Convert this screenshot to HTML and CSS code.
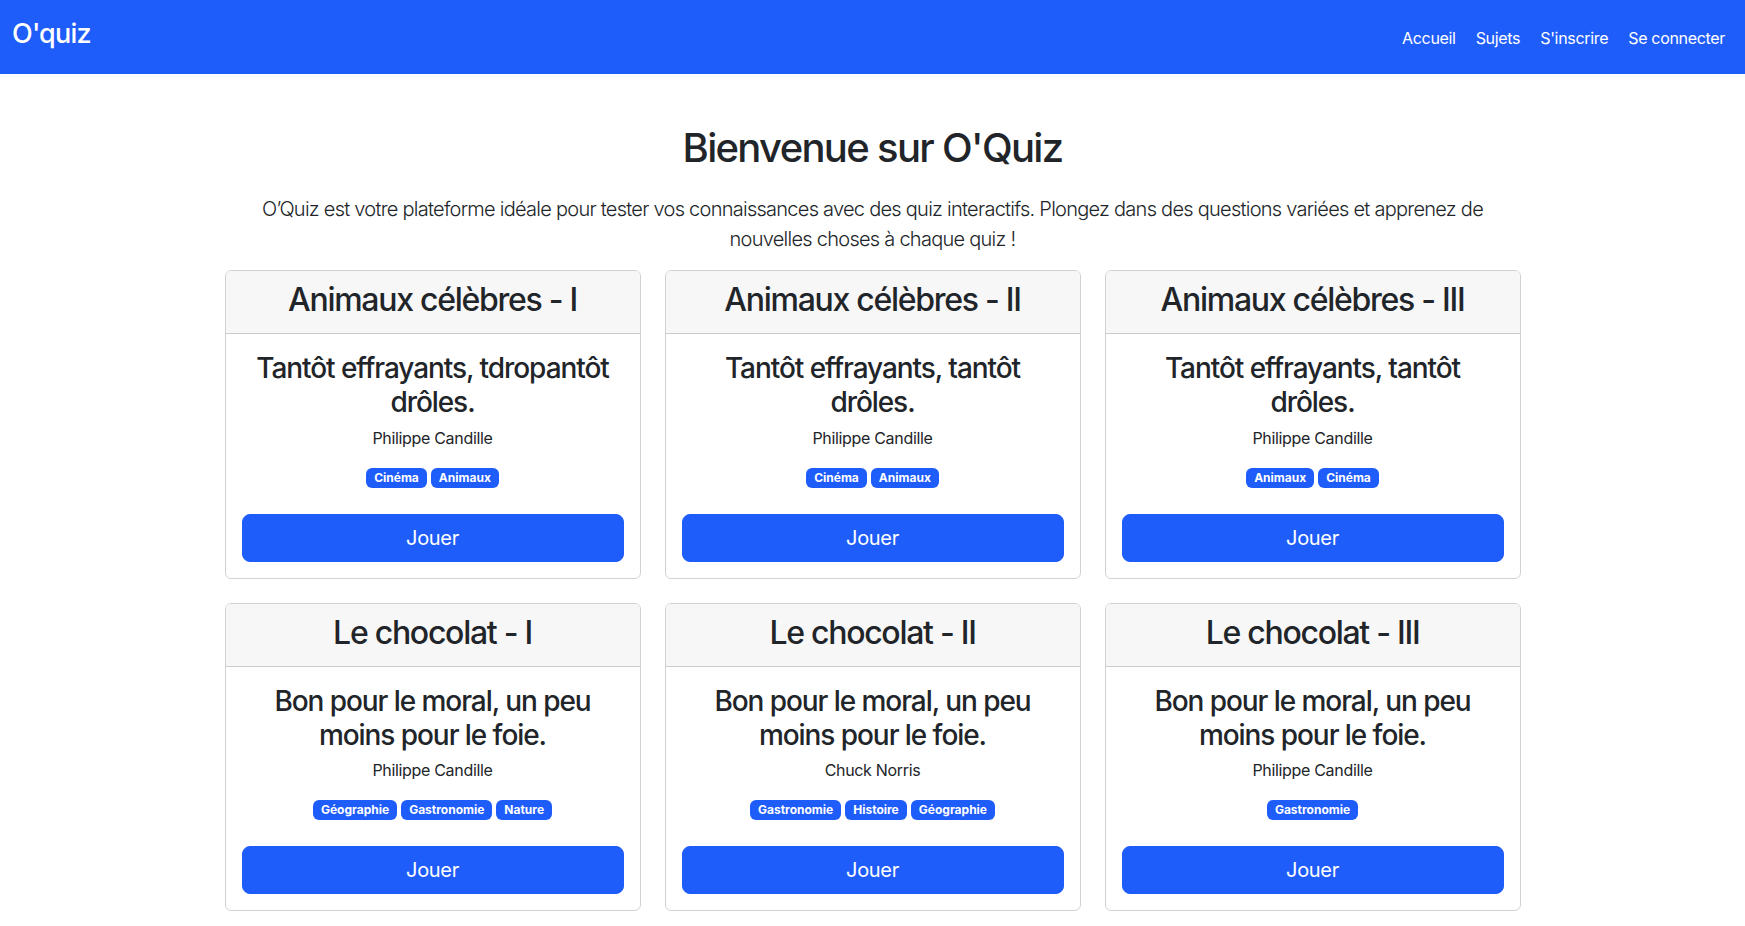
FILE: index.html
```html
<!DOCTYPE html>
<html lang="fr">
<head>
<meta charset="utf-8">
<title>O'quiz</title>
<link rel="stylesheet" href="styles.css">
</head>
<body>
<header class="navbar">
  <a class="brand" href="#">O'quiz</a>
  <nav class="nav">
    <a class="nav-link" href="#">Accueil</a>
    <a class="nav-link" href="#">Sujets</a>
    <a class="nav-link" href="#">S'inscrire</a>
    <a class="nav-link" href="#">Se connecter</a>
  </nav>
</header>
<main class="container">
  <h1 class="title">Bienvenue sur O'Quiz</h1>
  <p class="lead">O’Quiz est votre plateforme idéale pour tester vos connaissances avec des quiz interactifs. Plongez dans des questions variées et apprenez de nouvelles choses à chaque quiz !</p>
  <div class="grid">
    <article class="card">
      <div class="card-header"><h2>Animaux célèbres - I</h2></div>
      <div class="card-body">
        <h3>Tantôt effrayants, tdropantôt drôles.</h3>
        <p class="author">Philippe Candille</p>
        <div class="badges"><span class="badge">Cinéma</span><span class="badge">Animaux</span></div>
        <a class="btn" href="#">Jouer</a>
      </div>
    </article>
    <article class="card">
      <div class="card-header"><h2>Animaux célèbres - II</h2></div>
      <div class="card-body">
        <h3>Tantôt effrayants, tantôt drôles.</h3>
        <p class="author">Philippe Candille</p>
        <div class="badges"><span class="badge">Cinéma</span><span class="badge">Animaux</span></div>
        <a class="btn" href="#">Jouer</a>
      </div>
    </article>
    <article class="card">
      <div class="card-header"><h2>Animaux célèbres - III</h2></div>
      <div class="card-body">
        <h3>Tantôt effrayants, tantôt drôles.</h3>
        <p class="author">Philippe Candille</p>
        <div class="badges"><span class="badge">Animaux</span><span class="badge">Cinéma</span></div>
        <a class="btn" href="#">Jouer</a>
      </div>
    </article>
    <article class="card">
      <div class="card-header"><h2>Le chocolat - I</h2></div>
      <div class="card-body">
        <h3>Bon pour le moral, un peu moins pour le foie.</h3>
        <p class="author">Philippe Candille</p>
        <div class="badges"><span class="badge">Géographie</span><span class="badge">Gastronomie</span><span class="badge">Nature</span></div>
        <a class="btn" href="#">Jouer</a>
      </div>
    </article>
    <article class="card">
      <div class="card-header"><h2>Le chocolat - II</h2></div>
      <div class="card-body">
        <h3>Bon pour le moral, un peu moins pour le foie.</h3>
        <p class="author">Chuck Norris</p>
        <div class="badges"><span class="badge">Gastronomie</span><span class="badge">Histoire</span><span class="badge">Géographie</span></div>
        <a class="btn" href="#">Jouer</a>
      </div>
    </article>
    <article class="card">
      <div class="card-header"><h2>Le chocolat - III</h2></div>
      <div class="card-body">
        <h3>Bon pour le moral, un peu moins pour le foie.</h3>
        <p class="author">Philippe Candille</p>
        <div class="badges"><span class="badge">Gastronomie</span></div>
        <a class="btn" href="#">Jouer</a>
      </div>
    </article>
  </div>
</main>
</body>
</html>
```
FILE: styles.css
```css
* { box-sizing: border-box; }
body {
  margin: 0;
  font-family: Inter, "Noto Sans", "Liberation Sans", sans-serif;
  color: #212529;
  background: #fff;
  font-size: 16px;
  line-height: 1.5;
  letter-spacing: -0.02em;
}
a { text-decoration: none; }
.navbar {
  height: 74px;
  background: #1f5dfb;
  display: flex;
  align-items: center;
  justify-content: space-between;
  padding: 0 12px;
}
.brand {
  color: #fff;
  font-size: 27px;
  font-weight: 500;
  line-height: 1.2;
  letter-spacing: -0.03em;
  margin-top: -6px;
}
.nav {
  display: flex;
  gap: 4px;
  padding-top: 2px;
}
.nav-link {
  color: #fff;
  font-size: 16px;
  padding: 8px;
}
.container {
  max-width: 1320px;
  margin: 0 auto;
  padding: 0 12px 16px;
}
.title {
  margin: 50px 0 22px;
  font-size: 40px;
  font-weight: 500;
  line-height: 1.2;
  letter-spacing: -0.042em;
  text-align: center;
}
.lead {
  margin: 0 0 16px;
  font-size: 20px;
  font-weight: 300;
  line-height: 30px;
  letter-spacing: -0.037em;
  text-align: center;
}
.grid {
  display: grid;
  grid-template-columns: repeat(3, 1fr);
  gap: 24px;
}
.card {
  border: 1px solid rgba(0,0,0,.175);
  border-radius: 6px;
  overflow: hidden;
  text-align: center;
}
.card-header {
  background: #f7f7f7;
  border-bottom: 1px solid rgba(0,0,0,.175);
  padding: 10px 16px 6px;
}
.card-header h2 {
  margin: 0 0 8px;
  font-size: 32px;
  font-weight: 500;
  line-height: 1.2;
  letter-spacing: -0.04em;
}
.card-body {
  padding: 16px;
}
.card-body h3 {
  margin: 2px 0 6px;
  font-size: 28px;
  font-weight: 500;
  line-height: 1.2;
  letter-spacing: -0.038em;
}
.author {
  margin: 0 0 16px;
}
.badges {
  display: flex;
  justify-content: center;
  align-items: center;
  gap: 4px;
  height: 24px;
  margin-bottom: 24px;
}
.badge {
  background: #1f5dfb;
  color: #fff;
  font-size: 12px;
  font-weight: 700;
  line-height: 1;
  letter-spacing: 0;
  padding: 4px 8px;
  border-radius: 6px;
}
.btn {
  display: block;
  background: #1f5dfb;
  color: #fff;
  border: 1px solid #1f5dfb;
  border-radius: 8px;
  padding: 8px 16px;
  font-size: 20px;
  line-height: 30px;
}
```
